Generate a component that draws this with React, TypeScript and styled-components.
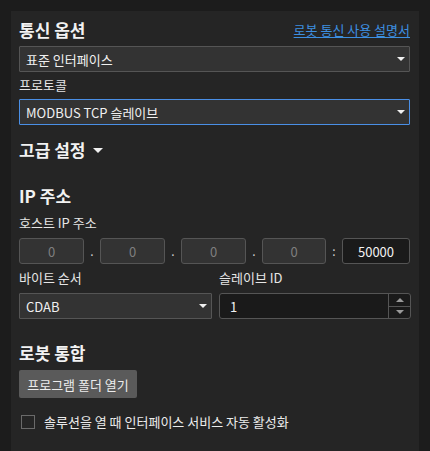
import React from "react";
import styled, { createGlobalStyle } from "styled-components";

const Global = createGlobalStyle`
  html, body { margin: 0; padding: 0; background: #1c1c1c; }
  body { font-family: "Noto Sans CJK KR", "Noto Sans", sans-serif; color: #e8e8e8; }
`;

const Page = styled.div`
  width: 430px;
  height: 451px;
  background: #1c1c1c;
  padding: 11px 0 0 11px;
  box-sizing: border-box;
`;

const Panel = styled.div`
  width: 408px;
  height: 440px;
  background: #252525;
  box-sizing: border-box;
  padding: 0 9px 0 8px;
  display: flex;
  flex-direction: column;
`;

const HeaderRow = styled.div`
  display: flex;
  align-items: center;
  justify-content: space-between;
  height: 24px;
  margin-top: 7px;
  margin-bottom: 4px;
`;

const SectionTitle = styled.div<{ $mt?: number }>`
  font-size: 17px;
  font-weight: 700;
  line-height: 24px;
  color: #f2f2f2;
  margin-top: ${(p) => p.$mt ?? 0}px;
  display: flex;
  align-items: center;
  gap: 8px;
`;

const Link = styled.a`
  font-size: 13px;
  color: #3d8fe0;
  text-decoration: underline;
  text-underline-offset: 2px;
  line-height: 18px;
  cursor: pointer;
`;

const Label = styled.div<{ $mt?: number; $mb?: number }>`
  font-size: 13px;
  line-height: 18px;
  color: #e6e6e6;
  margin-top: ${(p) => p.$mt ?? 0}px;
  margin-bottom: ${(p) => p.$mb ?? 6}px;
`;

const Select = styled.div<{ $focus?: boolean }>`
  height: 26px;
  box-sizing: border-box;
  background: #333333;
  border: 1px solid ${(p) => (p.$focus ? "#4a8fe6" : "#555555")};
  border-radius: 1px;
  display: flex;
  align-items: center;
  justify-content: space-between;
  padding: 0 4px 0 6px;
  font-size: 13px;
  color: #f0f0f0;
`;

const Caret = styled.span<{ $size?: number; $color?: string }>`
  width: 0;
  height: 0;
  border-left: ${(p) => p.$size ?? 4}px solid transparent;
  border-right: ${(p) => p.$size ?? 4}px solid transparent;
  border-top: ${(p) => p.$size ?? 4}px solid ${(p) => p.$color ?? "#f0f0f0"};
`;

const IpRow = styled.div`
  display: grid;
  grid-template-columns: 65px 16px 65px 16px 65px 16px 64px 16px 1fr;
  align-items: center;
  height: 26px;
`;

const IpBox = styled.div<{ $dark?: boolean }>`
  height: 26px;
  box-sizing: border-box;
  border: 1px solid #555555;
  border-radius: 3px;
  background: ${(p) => (p.$dark ? "#1a1a1a" : "#333333")};
  color: ${(p) => (p.$dark ? "#f2f2f2" : "#7f7f7f")};
  font-size: 13px;
  display: flex;
  align-items: center;
  justify-content: center;
`;

const Sep = styled.span`
  text-align: center;
  font-size: 12px;
  color: #d0d0d0;
  line-height: 26px;
`;

const TwoCol = styled.div<{ $mt?: number }>`
  display: grid;
  grid-template-columns: 193px 192px;
  column-gap: 7px;
  margin-top: ${(p) => p.$mt ?? 0}px;
`;

const Col = styled.div`
  display: flex;
  flex-direction: column;
`;

const Spin = styled.div`
  height: 26px;
  box-sizing: border-box;
  border: 1px solid #555555;
  border-radius: 3px;
  background: #1a1a1a;
  display: flex;
  font-size: 13px;
  color: #f2f2f2;
`;

const SpinValue = styled.div`
  flex: 1;
  display: flex;
  align-items: center;
  padding-left: 10px;
`;

const SpinButtons = styled.div`
  width: 21px;
  border-left: 1px solid #555555;
  display: flex;
  flex-direction: column;
`;

const SpinBtn = styled.div<{ $top?: boolean }>`
  flex: 1;
  display: flex;
  align-items: center;
  justify-content: center;
  border-top: ${(p) => (p.$top ? "none" : "1px solid #555555")};
`;

const UpCaret = styled.span`
  width: 0;
  height: 0;
  border-left: 4px solid transparent;
  border-right: 4px solid transparent;
  border-bottom: 4px solid #9a9a9a;
`;

const Button = styled.button`
  align-self: flex-start;
  height: 28px;
  width: 118px;
  margin-top: 5px;
  border: none;
  border-radius: 2px;
  background: #5a5a5a;
  color: #ececec;
  font-family: inherit;
  font-size: 13px;
  padding: 0;
`;

const CheckRow = styled.label`
  display: flex;
  align-items: center;
  gap: 9px;
  margin-top: 14px;
  padding-left: 2px;
  font-size: 13px;
  line-height: 19px;
  color: #ececec;
`;

const Box = styled.span`
  width: 14px;
  height: 14px;
  box-sizing: border-box;
  border: 1px solid #6a6a6a;
  background: #252525;
`;

export default function App() {
  return (
    <>
      <Global />
      <Page>
        <Panel>
          <HeaderRow>
            <SectionTitle>통신 옵션</SectionTitle>
            <Link>로봇 통신 사용 설명서</Link>
          </HeaderRow>
          <Select>
            <span>표준 인터페이스</span>
            <Caret />
          </Select>
          <Label $mt={4} $mb={5}>프로토콜</Label>
          <Select $focus>
            <span>MODBUS TCP 슬레이브</span>
            <Caret />
          </Select>
          <SectionTitle $mt={13}>
            고급 설정 <Caret $size={5} />
          </SectionTitle>
          <SectionTitle $mt={22}>IP 주소</SectionTitle>
          <Label $mt={6}>호스트 IP 주소</Label>
          <IpRow>
            <IpBox>0</IpBox>
            <Sep>.</Sep>
            <IpBox>0</IpBox>
            <Sep>.</Sep>
            <IpBox>0</IpBox>
            <Sep>.</Sep>
            <IpBox>0</IpBox>
            <Sep>:</Sep>
            <IpBox $dark>50000</IpBox>
          </IpRow>
          <TwoCol $mt={5}>
            <Col>
              <Label>바이트 순서</Label>
              <Select>
                <span>CDAB</span>
                <Caret />
              </Select>
            </Col>
            <Col>
              <Label>슬레이브 ID</Label>
              <Spin>
                <SpinValue>1</SpinValue>
                <SpinButtons>
                  <SpinBtn $top>
                    <UpCaret />
                  </SpinBtn>
                  <SpinBtn>
                    <Caret $color="#9a9a9a" />
                  </SpinBtn>
                </SpinButtons>
              </Spin>
            </Col>
          </TwoCol>
          <SectionTitle $mt={22}>로봇 통합</SectionTitle>
          <Button>프로그램 폴더 열기</Button>
          <CheckRow>
            <Box />
            솔루션을 열 때 인터페이스 서비스 자동 활성화
          </CheckRow>
        </Panel>
      </Page>
    </>
  );
}
